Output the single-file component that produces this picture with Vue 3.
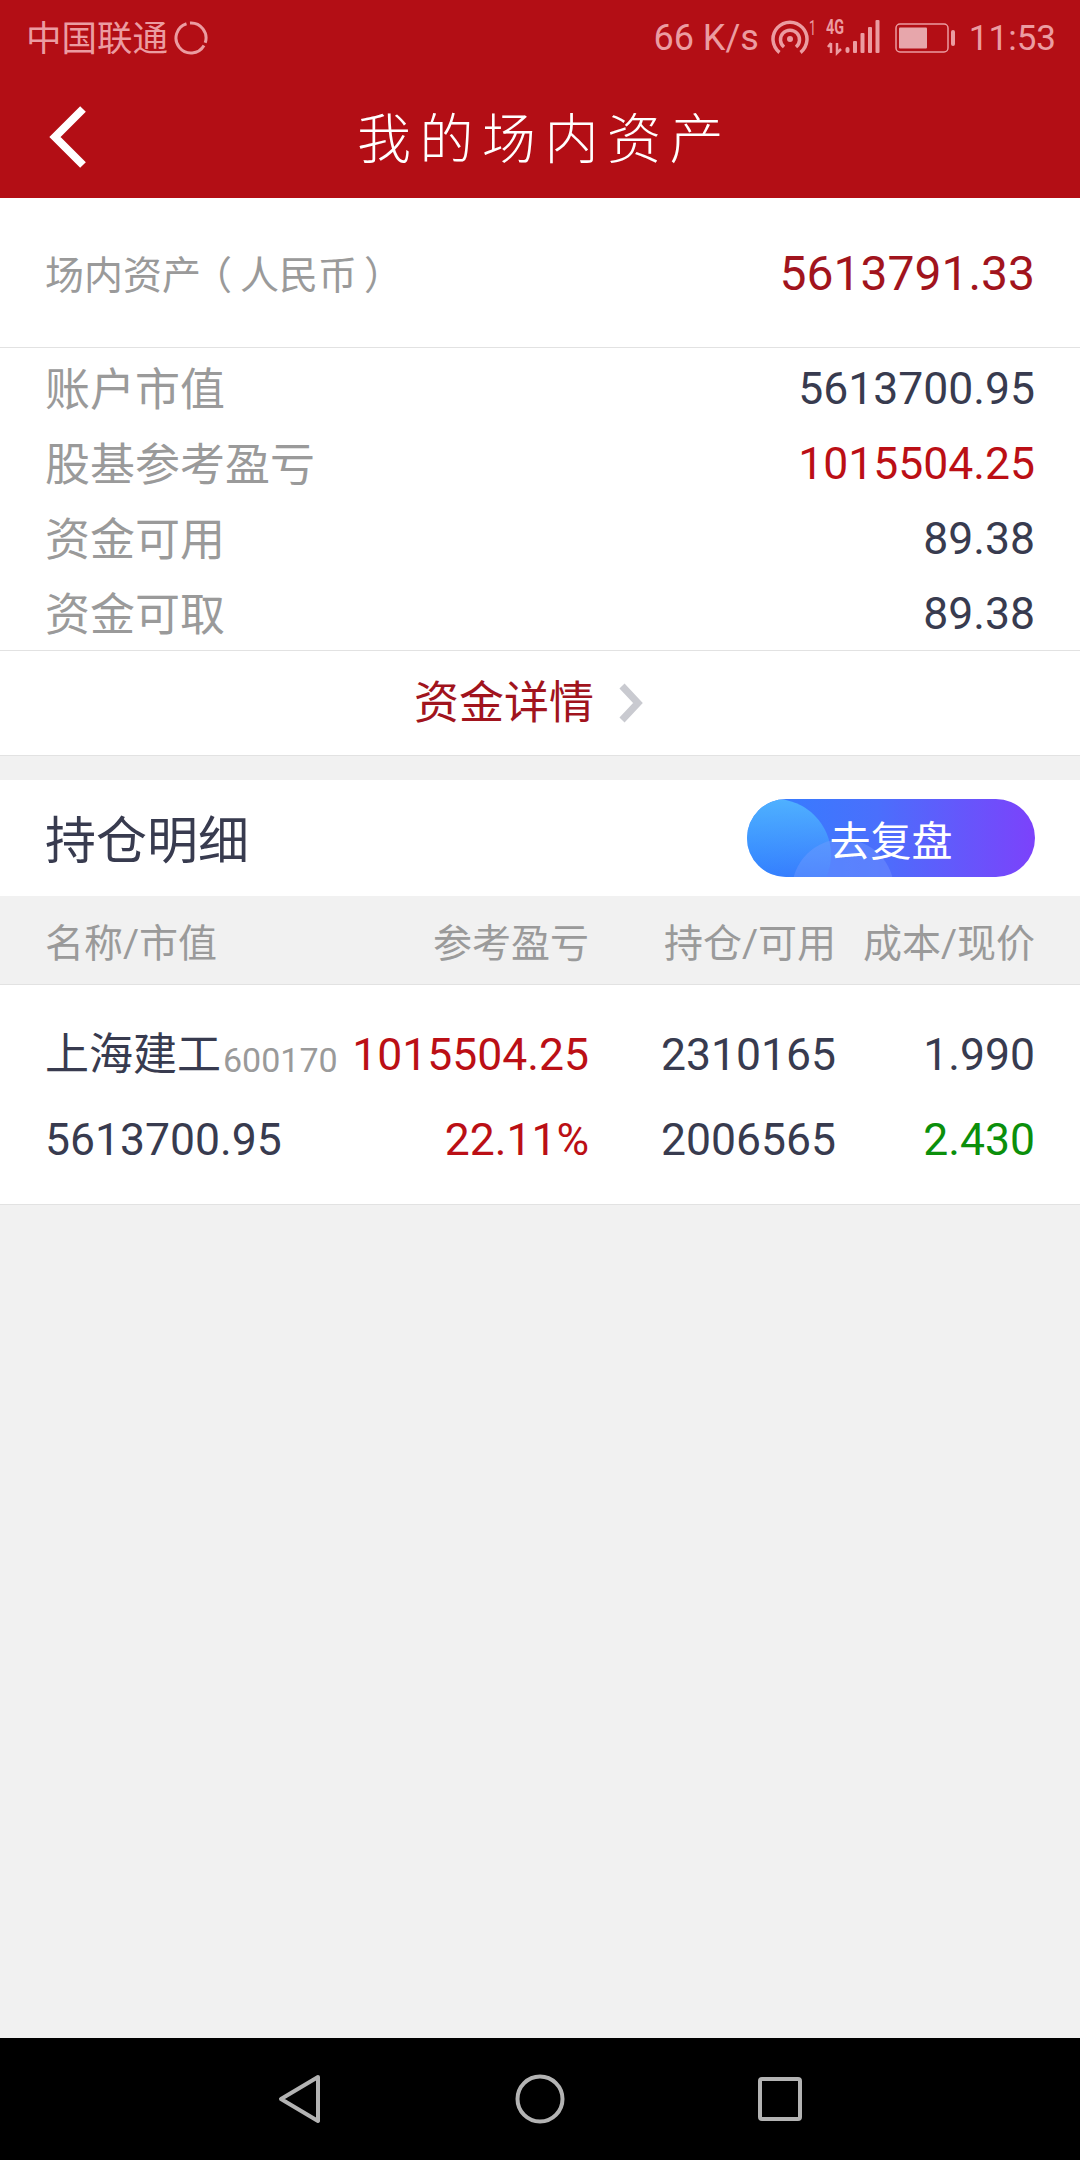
<template>
  <div class="page">
    <header class="top">
      <div class="status-bar">
        <div class="carrier">
          <span>中国联通</span>
          <svg class="spinner" width="36" height="36" viewBox="0 0 36 36">
            <path d="M17 3A15 15 0 0 1 32.2 22.8M31 25.5A15 15 0 1 1 13.5 3.7" fill="none" stroke="currentColor" stroke-width="3" />
          </svg>
        </div>
        <div class="status-right">
          <span class="speed">66 K/s</span>
          <svg class="hotspot" width="50" height="44" viewBox="0 -4 50 44">
            <g fill="none" stroke="currentColor" stroke-width="3.5">
              <path d="M8.5 32.5A17 17 0 1 1 29.5 32.5" />
              <path d="M13 27A9.5 9.5 0 1 1 25 27" />
            </g>
            <circle cx="19" cy="19" r="3" fill="currentColor" />
            <text x="38" y="15" class="tiny" textLength="7" lengthAdjust="spacingAndGlyphs">1</text>
          </svg>
          <svg class="signal" width="54" height="44" viewBox="0 -4 54 44">
            <text x="0" y="14" class="tiny tiny-bold" textLength="18" lengthAdjust="spacingAndGlyphs">4G</text>
            <path d="M5 23v10M2 27l3-4M11 23v10l4-4" fill="none" stroke="currentColor" stroke-width="2.5" />
            <rect x="19.5" y="27" width="4" height="6" rx="2" fill="currentColor" />
            <rect x="27" y="21" width="4" height="12" rx="1" fill="currentColor" />
            <rect x="34.5" y="13" width="4" height="20" rx="1" fill="currentColor" />
            <rect x="42" y="7" width="4" height="26" rx="1" fill="currentColor" />
            <rect x="49.5" y="0" width="4" height="33" rx="1" fill="currentColor" />
          </svg>
          <svg class="battery" width="61" height="30" viewBox="0 0 61 30">
            <rect x="1" y="1" width="52" height="28" rx="4" fill="none" stroke="currentColor" stroke-width="1.5" />
            <rect x="4" y="4.5" width="28" height="21" rx="1" fill="#e7a6ab" />
            <rect x="56" y="7" width="4" height="16" rx="2" fill="currentColor" />
          </svg>
          <span class="time">11:53</span>
        </div>
      </div>
      <div class="nav">
        <svg class="back" width="44" height="70" viewBox="0 0 44 70">
          <path d="M39 7L11 35L39 63" fill="none" stroke="#fff" stroke-width="8" />
        </svg>
        <h1>我的场内资产</h1>
      </div>
    </header>

    <section class="card assets">
      <div class="total">
        <span class="total-label">场内资产<span class="paren paren-l">（</span>人民币<span class="paren paren-r">）</span></span>
        <span class="total-value">5613791.33</span>
      </div>
      <div class="stats">
        <div v-for="item in stats" :key="item.label" class="stat-row">
          <span class="stat-label">{{ item.label }}</span>
          <span class="stat-value" :class="{ red: item.red }">{{ item.value }}</span>
        </div>
      </div>
      <div class="detail-link">
        <span>资金详情</span>
        <svg width="26" height="40" viewBox="0 0 26 40">
          <path d="M4 3L20 20L4 37" fill="none" stroke="#c9cad0" stroke-width="7" />
        </svg>
      </div>
    </section>

    <section class="holdings">
      <div class="holdings-head">
        <h2>持仓明细</h2>
        <div class="review-btn"><span>去复盘</span></div>
      </div>
      <div class="table-head">
        <span class="col-name">名称/市值</span>
        <span class="col-profit">参考盈亏</span>
        <span class="col-qty">持仓/可用</span>
        <span class="col-price">成本/现价</span>
      </div>
      <div class="table-row">
        <div class="col-name">
          <div class="name-line">上海建工<small>600170</small></div>
          <div>5613700.95</div>
        </div>
        <div class="col-profit red">
          <div>1015504.25</div>
          <div>22.11%</div>
        </div>
        <div class="col-qty">
          <div>2310165</div>
          <div>2006565</div>
        </div>
        <div class="col-price">
          <div>1.990</div>
          <div class="green">2.430</div>
        </div>
      </div>
    </section>

    <div class="spacer"></div>

    <footer class="nav-bar">
      <svg width="44" height="52" viewBox="0 0 44 52">
        <path d="M40 4L3 26L40 48Z" fill="none" stroke="#b3b3b3" stroke-width="4" stroke-linejoin="round" />
      </svg>
      <svg width="50" height="50" viewBox="0 0 50 50">
        <circle cx="25" cy="25" r="22.5" fill="none" stroke="#b3b3b3" stroke-width="4" />
      </svg>
      <svg width="46" height="46" viewBox="0 0 46 46">
        <rect x="3" y="3" width="40" height="40" rx="2" fill="none" stroke="#b3b3b3" stroke-width="4" />
      </svg>
    </footer>
  </div>
</template>

<script setup>
const stats = [
  { label: '账户市值', value: '5613700.95' },
  { label: '股基参考盈亏', value: '1015504.25', red: true },
  { label: '资金可用', value: '89.38' },
  { label: '资金可取', value: '89.38' },
]
</script>

<style>
html,
body {
  margin: 0;
  background: #f1f1f1;
}
</style>

<style scoped>
.page {
  width: 1080px;
  height: 2160px;
  display: flex;
  flex-direction: column;
  background: #f1f1f1;
  color: #383b4f;
  font-family: Roboto, "Noto Sans CJK SC", sans-serif;
}

.top {
  height: 198px;
  background: #b30e15;
  flex-shrink: 0;
}

.status-bar {
  height: 76px;
  padding: 0 24px 0 26px;
  display: flex;
  justify-content: space-between;
  align-items: center;
  color: #eb9ca1;
  font-size: 35px;
}

.carrier,
.status-right {
  display: flex;
  align-items: center;
}

.carrier span {
  font-size: 35.5px;
  padding-bottom: 5px;
}

.spinner {
  margin-left: 5px;
}

.speed {
  font-size: 36px;
  margin-right: 12px;
}

.hotspot {
  margin-right: 5px;
}

.signal {
  margin-right: 15px;
}

.battery {
  margin-right: 13px;
}

.tiny {
  font-size: 20px;
  fill: currentColor;
}

.tiny-bold {
  font-weight: 700;
}

.nav {
  height: 122px;
  display: flex;
  align-items: center;
  padding-left: 44px;
}

.nav h1 {
  flex: 1;
  margin: -3px 0 0 -44px;
  padding-right: 44px;
  text-indent: 9px;
  text-align: center;
  font-size: 54px;
  font-weight: 300;
  letter-spacing: 8.5px;
  color: #fff;
}

.card,
.holdings {
  background: #fff;
}

.total {
  height: 150px;
  padding: 0 45px;
  display: flex;
  justify-content: space-between;
  align-items: center;
  border-bottom: 1px solid #e2e2e2;
  box-sizing: border-box;
}

.total-label {
  font-size: 39px;
  color: #9a9a9a;
  padding-bottom: 2px;
}

.paren {
  font-feature-settings: "halt";
}

.paren-l {
  padding: 0 8px 0 11.5px;
}

.paren-r {
  padding: 0 12.5px 0 7px;
}

.total-value {
  font-size: 48px;
  color: #a1141d;
  padding-top: 2px;
}

.stats {
  padding: 3px 45px 0;
}

.stat-row {
  height: 75px;
  display: flex;
  justify-content: space-between;
  align-items: center;
}

.stat-label {
  font-size: 45px;
  color: #9a9a9a;
  padding-bottom: 5px;
}

.stat-value {
  font-size: 44.5px;
}

.red {
  color: #bb0f15;
}

.green {
  color: #0b8f0b;
}

.detail-link {
  height: 106px;
  border-top: 1px solid #e2e2e2;
  border-bottom: 1px solid #e2e2e2;
  box-sizing: border-box;
  display: flex;
  justify-content: center;
  align-items: center;
  gap: 24px;
  padding-right: 22px;
  font-size: 45px;
  color: #a1141d;
  margin-top: -1px;
}

.detail-link span {
  padding-bottom: 8px;
}

.holdings {
  margin-top: 24px;
}

.holdings-head {
  height: 116px;
  padding: 0 45px;
  display: flex;
  justify-content: space-between;
  align-items: center;
}

.holdings-head h2 {
  margin: 0;
  font-size: 51px;
  font-weight: 400;
  padding-bottom: 2px;
}

.review-btn {
  width: 288px;
  height: 78px;
  border-radius: 39px;
  overflow: hidden;
  position: relative;
  background: linear-gradient(90deg, #3080ff 0%, #4a6ffc 45%, #7c42fb 100%);
  color: #fff;
  font-size: 41px;
  display: flex;
  align-items: center;
  justify-content: center;
  box-sizing: border-box;
}

.review-btn span {
  position: relative;
  z-index: 1;
}

.review-btn::before {
  content: '';
  position: absolute;
  left: -28px;
  top: 0;
  width: 112px;
  height: 112px;
  border-radius: 50%;
  background: linear-gradient(180deg, rgba(80, 180, 255, 0.95), rgba(50, 130, 255, 0.4) 70%);
}

.review-btn::after {
  content: '';
  position: absolute;
  left: 45px;
  top: 40px;
  width: 102px;
  height: 102px;
  border-radius: 50%;
  background: rgba(130, 160, 255, 0.35);
}

.table-head {
  height: 89px;
  padding: 0 45px 1px;
  display: flex;
  align-items: center;
  background: #f1f1f1;
  border-bottom: 1px solid #e2e2e2;
  box-sizing: border-box;
  font-size: 39px;
  color: #9a9a9a;
}

.col-name {
  flex: 0 0 293px;
  min-width: 0;
}

.col-profit {
  flex: 0 0 251px;
  text-align: right;
  white-space: nowrap;
}

.col-qty {
  flex: 0 0 247px;
  text-align: right;
}

.col-price {
  flex: 0 0 199px;
  text-align: right;
}

.table-row {
  height: 220px;
  padding: 6px 45px 0;
  display: flex;
  align-items: center;
  border-bottom: 1px solid #e2e2e2;
  box-sizing: border-box;
  font-size: 44.5px;
  line-height: 85px;
}

.table-row > div > div {
  height: 85px;
}

.name-line {
  font-size: 44px;
  white-space: nowrap;
}

.name-line small {
  font-size: 34px;
  color: #9a9a9a;
  margin-left: 2px;
  vertical-align: -2px;
}

.spacer {
  flex: 1;
}

.nav-bar {
  height: 122px;
  background: #000;
  flex-shrink: 0;
  display: flex;
  justify-content: center;
  align-items: center;
}

.nav-bar svg:nth-child(1) {
  margin-right: 193px;
}

.nav-bar svg:nth-child(3) {
  margin-left: 192px;
}
</style>
